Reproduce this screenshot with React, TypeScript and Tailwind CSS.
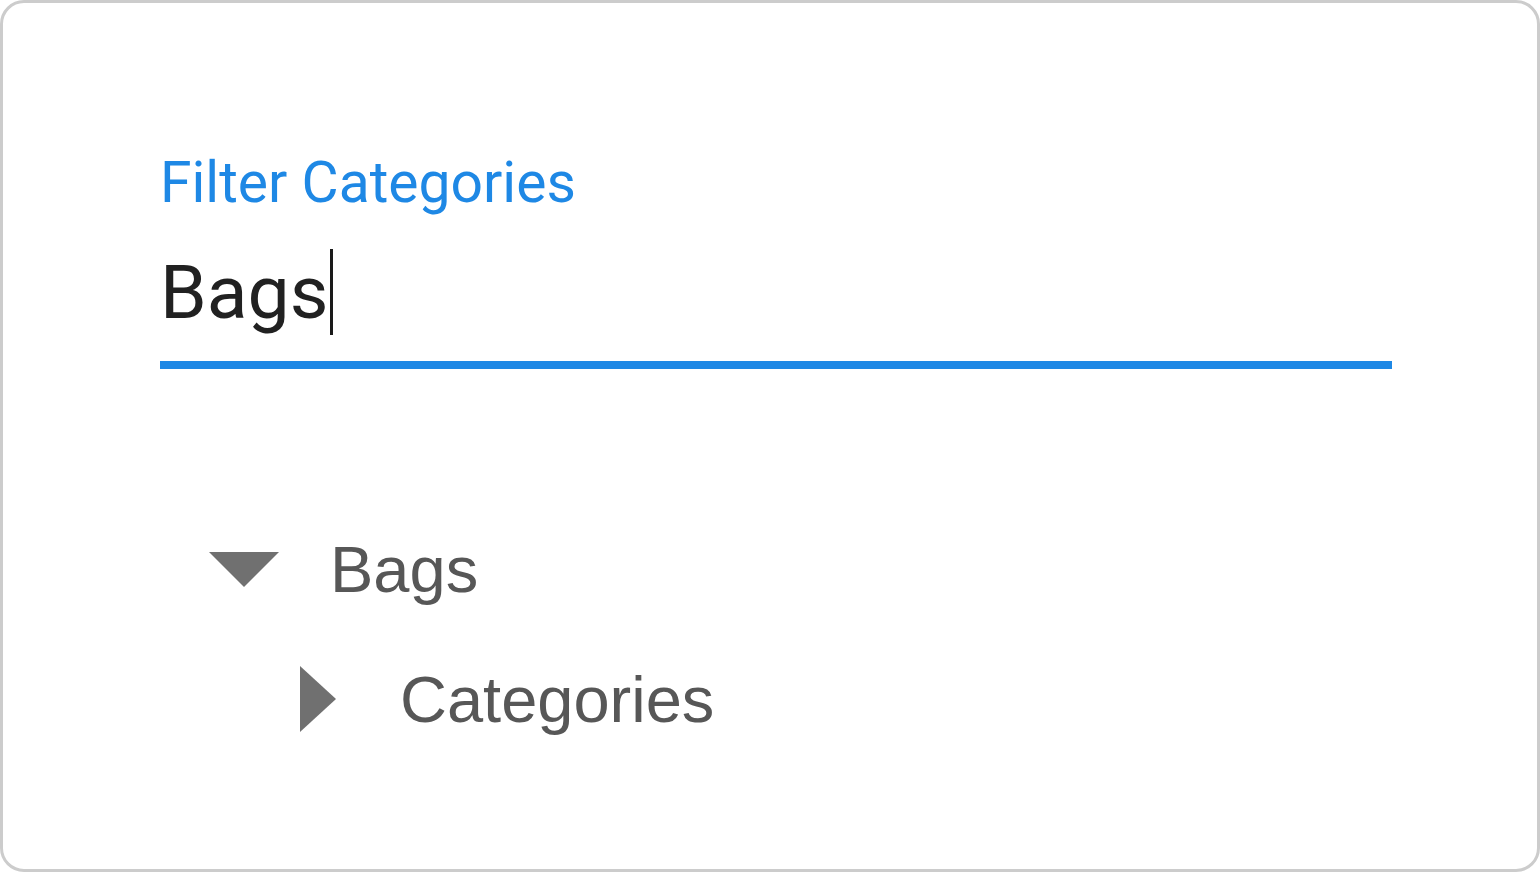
const roboto = { fontFamily: "Roboto, 'Liberation Sans', sans-serif" };

function TreeRow({
  label,
  open,
  indent,
}: {
  label: string;
  open: boolean;
  indent: string;
}) {
  return (
    <div className={`flex items-center h-[130px] ${indent}`}>
      {open ? (
        <svg width="70" height="35" viewBox="0 0 70 35" className="shrink-0">
          <polygon points="0,0 70,0 35,35" fill="#707070" />
        </svg>
      ) : (
        <svg width="36" height="66" viewBox="0 0 36 66" className="shrink-0">
          <polygon points="0,0 36,33 0,66" fill="#707070" />
        </svg>
      )}
      <span
        className={`text-[65px] leading-none text-[#575757] ${open ? "ml-[51px]" : "ml-[64px]"}`}
        style={{ fontFamily: "'Liberation Sans', Arial, sans-serif" }}
      >
        {label}
      </span>
    </div>
  );
}

export default function App() {
  return (
    <div className="w-[1540px] h-[872px] bg-white">
      <div className="w-full h-full rounded-[24px] border-[3px] border-[#cccccc] pl-[157px] pt-[140px]">
        <div className="w-[1232px]">
          <div className="text-[57px] leading-[80px] text-[#1e88e5]" style={roboto}>
            Filter Categories
          </div>
          <div className="flex items-center h-[146px] border-b-[8px] border-[#1e88e5]">
            <span className="text-[75px] leading-none text-[#212121]" style={roboto}>
              Bags
            </span>
            <span className="ml-[2px] w-[3px] h-[86px] bg-[#1a1a1a]" />
          </div>
        </div>
        <div className="pt-[135px]">
          <TreeRow label="Bags" open indent="pl-[49px]" />
          <TreeRow label="Categories" open={false} indent="pl-[140px]" />
        </div>
      </div>
    </div>
  );
}
